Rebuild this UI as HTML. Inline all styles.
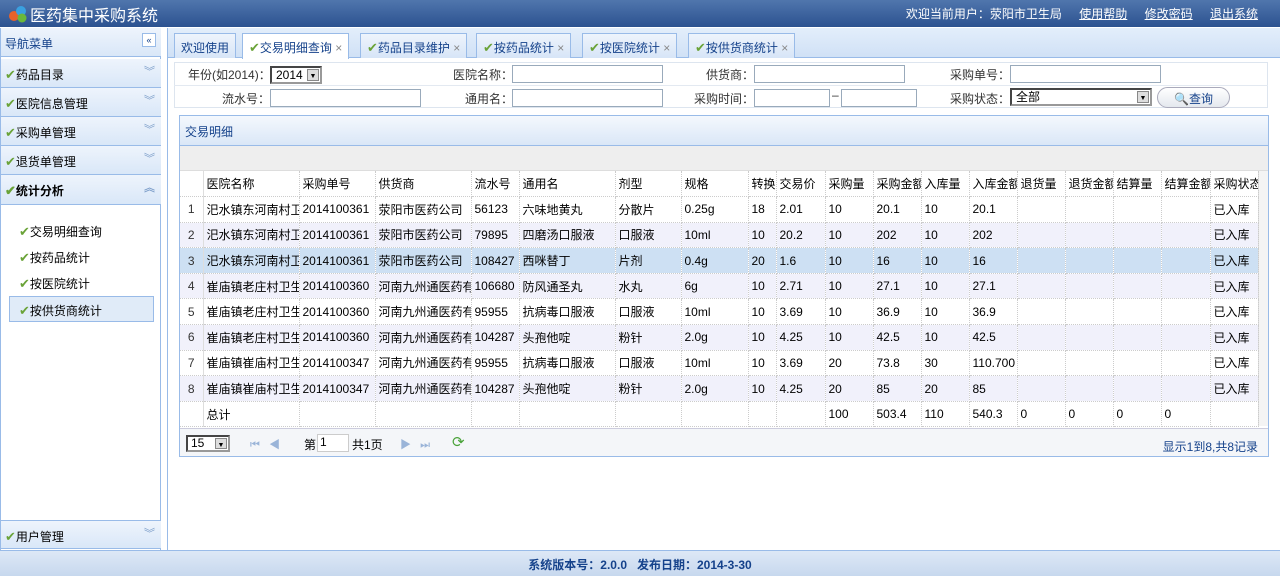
<!DOCTYPE html>
<html><head><meta charset="utf-8"><style>
*{margin:0;padding:0;box-sizing:border-box}
body{width:1280px;height:576px;overflow:hidden;position:relative;font:12px "Liberation Sans","Noto Sans CJK SC",sans-serif;color:#000;background:#fff}
.abs{position:absolute}
#hd{left:0;top:0;width:1280px;height:27px;background:linear-gradient(#5076ad,#2c5290);}
#hd .t{left:30px;top:2px;color:#fff;font-size:16px}
#hd .r{right:22px;top:5px;color:#fff;font-size:12px}
#hd .r u{margin-left:14px}
#left{left:0;top:28px;width:161px;height:522px;background:#fff;border-right:1px solid #99bbe8;border-left:1px solid #99bbe8}
.lh{position:absolute;left:0;width:160px;height:29px;background:linear-gradient(#eef4fc,#d9e7f8);border-bottom:1px solid #99bbe8;padding:7px 0 0 4px;font-size:12px;color:#000}
.lh .ar{position:absolute;right:6px;top:4px;color:#7a9cc8;font-size:11px}
.ck{color:#6aa338;font-size:13px}
.sub{position:absolute;left:18px;color:#000}
#main{left:167px;top:28px;width:1113px;height:522px;background:#fff;border-left:1px solid #99bbe8}
#tabs{left:0;top:0;width:1113px;height:30px;background:linear-gradient(#e3eefb,#d0e1f6);border-bottom:1px solid #99bbe8}
.tab{position:absolute;top:5px;height:25px;border:1px solid #99bbe8;border-bottom:none;background:linear-gradient(#eef4fc,#d7e5f7);padding:5px 6px 0;color:#15428b;white-space:nowrap}
.tab.a{background:#fff;height:26px}
.fl{position:absolute;color:#333}
.in{position:absolute;height:18px;border:1px solid #9ab;background:#fff}
#pan{left:179px;top:115px;width:1090px;height:342px;border:1px solid #99bbe8}
table{border-collapse:collapse;table-layout:fixed;position:absolute;left:0}
td{height:25.6px;border-right:1px dotted #ccc;border-bottom:1px dotted #ccc;padding-left:3px;white-space:nowrap;overflow:hidden;color:#000}
td.n{text-align:center;padding:0;color:#333;border-right:1px solid #ddd}
tr.e td{background:#f1f1fb}
tr.s td{background:#cde0f3}
#ft{left:0;top:550px;width:1280px;height:26px;background:linear-gradient(#dde8f6,#c7d8ee);border-top:1px solid #99bbe8;text-align:center;font-weight:bold;color:#15428b;padding-top:5px}
</style></head><body>
<div id="hd" class="abs">
<svg class="abs" style="left:8px;top:5px" width="20" height="18"><circle cx="6" cy="11" r="5" fill="#e8622a"/><circle cx="13" cy="6" r="5" fill="#3aa0e0"/><circle cx="14" cy="13" r="4.5" fill="#6ab83a"/></svg>
<div class="abs t">医药集中采购系统</div>
<div class="abs r">欢迎当前用户：荥阳市卫生局 <u>使用帮助</u> <u>修改密码</u> <u>退出系统</u></div>
</div>
<div id="left" class="abs">
<div class="lh" style="top:0;color:#15428b">导航菜单<span style="position:absolute;right:5px;top:5px;width:14px;height:14px;border:1px solid #99bbe8;font-size:9px;text-align:center;line-height:12px;background:#fff">«</span></div>
<div class="lh" style="top:31px"><span class="ck">✔</span>药品目录<span class="ar">︾</span></div>
<div class="lh" style="top:60px"><span class="ck">✔</span>医院信息管理<span class="ar">︾</span></div>
<div class="lh" style="top:89px"><span class="ck">✔</span>采购单管理<span class="ar">︾</span></div>
<div class="lh" style="top:118px"><span class="ck">✔</span>退货单管理<span class="ar">︾</span></div>
<div class="lh" style="top:147px;height:30px;font-weight:bold"><span class="ck">✔</span>统计分析<span class="ar">︽</span></div>
<div class="sub" style="top:195px"><span class="ck">✔</span>交易明细查询</div>
<div class="sub" style="top:221px"><span class="ck">✔</span>按药品统计</div>
<div class="sub" style="top:247px"><span class="ck">✔</span>按医院统计</div>
<div class="abs" style="left:8px;top:268px;width:145px;height:26px;border:1px solid #99bbe8;background:#e0ebf8"></div>
<div class="sub" style="top:274px"><span class="ck">✔</span>按供货商统计</div>
<div class="lh" style="top:492px;border-top:1px solid #99bbe8"><span class="ck">✔</span>用户管理<span class="ar">︾</span></div>
</div>
<div id="main" class="abs">
<div id="tabs" class="abs">
<div class="tab" style="left:6px">欢迎使用</div>
<div class="tab a" style="left:74px"><span class="ck">✔</span>交易明细查询 <span style="color:#888">×</span></div>
<div class="tab" style="left:192px"><span class="ck">✔</span>药品目录维护 <span style="color:#888">×</span></div>
<div class="tab" style="left:308px"><span class="ck">✔</span>按药品统计 <span style="color:#888">×</span></div>
<div class="tab" style="left:414px"><span class="ck">✔</span>按医院统计 <span style="color:#888">×</span></div>
<div class="tab" style="left:520px"><span class="ck">✔</span>按供货商统计 <span style="color:#888">×</span></div>
</div>
</div>
<div class="abs" style="left:174px;top:62px;width:1094px;height:46px;border:1px solid #dde5ef;background:#fff"></div>
<div class="abs" style="left:174px;top:85px;width:1094px;height:1px;background:#e3e9f1"></div>
<div class="fl" style="left:188px;top:66px">年份(如2014)：</div>
<div class="in" style="left:270px;top:66px;width:52px;border:2px inset #999;padding-left:4px;line-height:14px">2014<span style="position:absolute;right:1px;top:1px;width:12px;height:12px;background:#ddd;border:1px solid #888;font-size:7px;text-align:center">▼</span></div>
<div class="fl" style="left:453px;top:66px">医院名称：</div><div class="in" style="left:512px;top:65px;width:151px"></div>
<div class="fl" style="left:706px;top:66px">供货商：</div><div class="in" style="left:754px;top:65px;width:151px"></div>
<div class="fl" style="left:950px;top:66px">采购单号：</div><div class="in" style="left:1010px;top:65px;width:151px"></div>
<div class="fl" style="left:222px;top:90px">流水号：</div><div class="in" style="left:270px;top:89px;width:151px"></div>
<div class="fl" style="left:465px;top:90px">通用名：</div><div class="in" style="left:512px;top:89px;width:151px"></div>
<div class="fl" style="left:694px;top:90px">采购时间：</div><div class="in" style="left:754px;top:89px;width:76px"></div><div class="fl" style="left:832px;top:88px">–</div><div class="in" style="left:841px;top:89px;width:76px"></div>
<div class="fl" style="left:950px;top:90px">采购状态：</div>
<div class="in" style="left:1010px;top:88px;width:142px;border:2px inset #999;padding-left:4px;line-height:14px">全部<span style="position:absolute;right:1px;top:1px;width:12px;height:12px;background:#ddd;border:1px solid #888;font-size:7px;text-align:center">▼</span></div>
<div class="abs" style="left:1157px;top:87px;width:73px;height:21px;border:1px solid #aab;border-radius:11px;background:linear-gradient(#fff,#e4e8ee);padding:2px 0 0 16px;color:#15428b"><span style="color:#4a8ad0">🔍</span>查询</div>
<div id="pan" class="abs">
<div class="abs" style="left:0;top:0;width:1088px;height:30px;background:linear-gradient(#f4f8fd,#dae7f7);border-bottom:1px solid #99bbe8;padding:7px 0 0 5px;color:#15428b">交易明细</div>
<div class="abs" style="left:0;top:30px;width:1088px;height:25px;background:#eee;border-bottom:1px solid #ddd"></div>
<div class="abs" style="left:1078px;top:55px;width:10px;height:255px;background:#f4f4f4;border-left:1px solid #ddd"></div>
<table style="top:55px;width:1078px">
<colgroup><col style="width:23px"><col style="width:96px"><col style="width:76px"><col style="width:96px"><col style="width:48px"><col style="width:96px"><col style="width:66px"><col style="width:67px"><col style="width:28px"><col style="width:49px"><col style="width:48px"><col style="width:48px"><col style="width:48px"><col style="width:48px"><col style="width:48px"><col style="width:48px"><col style="width:48px"><col style="width:49px"><col style="width:48px"></colgroup>
<tr><td class="n"></td><td>医院名称</td><td>采购单号</td><td>供货商</td><td>流水号</td><td>通用名</td><td>剂型</td><td>规格</td><td>转换</td><td>交易价</td><td>采购量</td><td>采购金额</td><td>入库量</td><td>入库金额</td><td>退货量</td><td>退货金额</td><td>结算量</td><td>结算金额</td><td>采购状态</td></tr>
<tr><td class="n">1</td><td>汜水镇东河南村卫</td><td>2014100361</td><td>荥阳市医药公司</td><td>56123</td><td>六味地黄丸</td><td>分散片</td><td>0.25g</td><td>18</td><td>2.01</td><td>10</td><td>20.1</td><td>10</td><td>20.1</td><td></td><td></td><td></td><td></td><td>已入库</td></tr>
<tr class="e"><td class="n">2</td><td>汜水镇东河南村卫</td><td>2014100361</td><td>荥阳市医药公司</td><td>79895</td><td>四磨汤口服液</td><td>口服液</td><td>10ml</td><td>10</td><td>20.2</td><td>10</td><td>202</td><td>10</td><td>202</td><td></td><td></td><td></td><td></td><td>已入库</td></tr>
<tr class="s"><td class="n">3</td><td>汜水镇东河南村卫</td><td>2014100361</td><td>荥阳市医药公司</td><td>108427</td><td>西咪替丁</td><td>片剂</td><td>0.4g</td><td>20</td><td>1.6</td><td>10</td><td>16</td><td>10</td><td>16</td><td></td><td></td><td></td><td></td><td>已入库</td></tr>
<tr class="e"><td class="n">4</td><td>崔庙镇老庄村卫生</td><td>2014100360</td><td>河南九州通医药有</td><td>106680</td><td>防风通圣丸</td><td>水丸</td><td>6g</td><td>10</td><td>2.71</td><td>10</td><td>27.1</td><td>10</td><td>27.1</td><td></td><td></td><td></td><td></td><td>已入库</td></tr>
<tr><td class="n">5</td><td>崔庙镇老庄村卫生</td><td>2014100360</td><td>河南九州通医药有</td><td>95955</td><td>抗病毒口服液</td><td>口服液</td><td>10ml</td><td>10</td><td>3.69</td><td>10</td><td>36.9</td><td>10</td><td>36.9</td><td></td><td></td><td></td><td></td><td>已入库</td></tr>
<tr class="e"><td class="n">6</td><td>崔庙镇老庄村卫生</td><td>2014100360</td><td>河南九州通医药有</td><td>104287</td><td>头孢他啶</td><td>粉针</td><td>2.0g</td><td>10</td><td>4.25</td><td>10</td><td>42.5</td><td>10</td><td>42.5</td><td></td><td></td><td></td><td></td><td>已入库</td></tr>
<tr><td class="n">7</td><td>崔庙镇崔庙村卫生</td><td>2014100347</td><td>河南九州通医药有</td><td>95955</td><td>抗病毒口服液</td><td>口服液</td><td>10ml</td><td>10</td><td>3.69</td><td>20</td><td>73.8</td><td>30</td><td>110.700</td><td></td><td></td><td></td><td></td><td>已入库</td></tr>
<tr class="e"><td class="n">8</td><td>崔庙镇崔庙村卫生</td><td>2014100347</td><td>河南九州通医药有</td><td>104287</td><td>头孢他啶</td><td>粉针</td><td>2.0g</td><td>10</td><td>4.25</td><td>20</td><td>85</td><td>20</td><td>85</td><td></td><td></td><td></td><td></td><td>已入库</td></tr>
<tr><td class="n"></td><td>总计</td><td></td><td></td><td></td><td></td><td></td><td></td><td></td><td></td><td>100</td><td>503.4</td><td>110</td><td>540.3</td><td>0</td><td>0</td><td>0</td><td>0</td><td></td></tr>
</table>
<div class="abs" style="left:0;top:312px;width:1088px;height:28px;background:#f4f6f9;border-top:1px solid #ccd">
<div class="abs" style="left:6px;top:6px;width:44px;height:17px;border:2px inset #999;background:#fff;padding-left:3px;line-height:13px">15<span style="position:absolute;right:1px;top:1px;width:12px;height:11px;background:#ddd;border:1px solid #888;font-size:7px;text-align:center">▼</span></div>
<div class="abs" style="left:70px;top:7px;color:#9ab4d8;font-size:11px">⏮&nbsp;&nbsp;&nbsp;◀</div>
<div class="abs" style="left:124px;top:7px">第</div>
<div class="abs" style="left:137px;top:5px;width:32px;height:18px;border:1px solid #ccc;background:#fff;padding-left:2px">1</div>
<div class="abs" style="left:172px;top:7px">共1页</div>
<div class="abs" style="left:220px;top:7px;color:#9ab4d8;font-size:11px">▶&nbsp;&nbsp;&nbsp;⏭</div>
<div class="abs" style="left:272px;top:4px;color:#4aa33a;font-size:15px">⟳</div>
<div class="abs" style="right:10px;top:9px;color:#15428b">显示1到8,共8记录</div>
</div>
</div>
<div id="ft" class="abs">系统版本号：2.0.0&nbsp;&nbsp;&nbsp;发布日期：2014-3-30</div>
</body></html>
